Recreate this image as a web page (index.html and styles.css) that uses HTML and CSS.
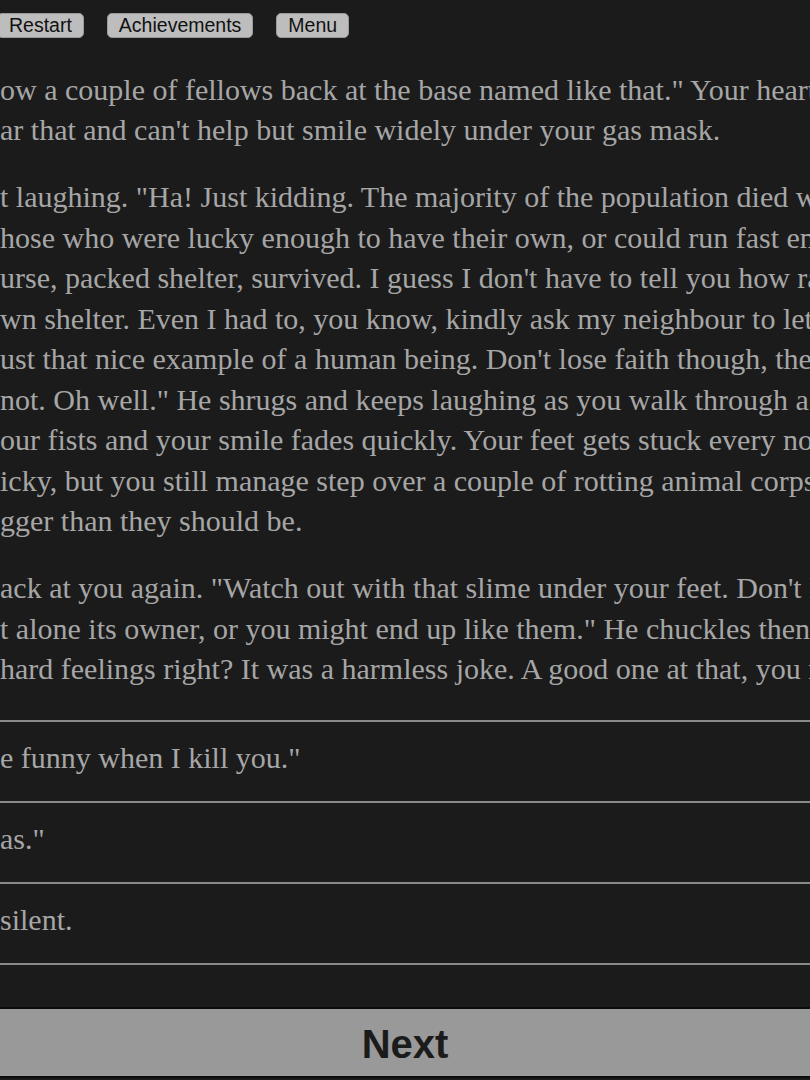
FILE: index.html
```html
<!DOCTYPE html>
<html lang="en">
<head>
<meta charset="utf-8">
<title>Story</title>
<link rel="stylesheet" href="styles.css">
</head>
<body>
<div class="page">
  <nav class="toolbar">
    <button class="tool-btn restart">Restart</button>
    <button class="tool-btn">Achievements</button>
    <button class="tool-btn">Menu</button>
  </nav>

  <main class="story">
    <p class="para">
      <span class="line">ow a couple of fellows back at the base named like that." Your hearthb</span>
      <span class="line">ar that and can't help but smile widely under your gas mask.</span>
    </p>
    <p class="para">
      <span class="line">t laughing. "Ha! Just kidding. The majority of the population died w</span>
      <span class="line">hose who were lucky enough to have their own, or could run fast en</span>
      <span class="line">urse, packed shelter, survived. I guess I don't have to tell you how ra</span>
      <span class="line">wn shelter. Even I had to, you know, kindly ask my neighbour to let m</span>
      <span class="line">ust that nice example of a human being. Don't lose faith though, they</span>
      <span class="line">not. Oh well." He shrugs and keeps laughing as you walk through a d</span>
      <span class="line">our fists and your smile fades quickly. Your feet gets stuck every now</span>
      <span class="line">icky, but you still manage step over a couple of rotting animal corpse</span>
      <span class="line">gger than they should be.</span>
    </p>
    <p class="para">
      <span class="line">ack at you again. "Watch out with that slime under your feet. Don't l</span>
      <span class="line">t alone its owner, or you might end up like them." He chuckles then</span>
      <span class="line">hard feelings right? It was a harmless joke. A good one at that, you m</span>
    </p>
  </main>

  <ul class="choices">
    <li class="choice">e funny when I kill you."</li>
    <li class="choice">as."</li>
    <li class="choice">silent.</li>
  </ul>

  <footer class="next-bar">
    <button class="next-btn">Next</button>
  </footer>
</div>
</body>
</html>
```

FILE: styles.css
```css
html, body {
  margin: 0;
  padding: 0;
  background: #1b1b1b;
}

.page {
  width: 810px;
  height: 1080px;
  overflow: hidden;
  background: #1b1b1b;
  color: #a6a6a6;
  font-family: "Liberation Serif", "Times New Roman", serif;
}

.toolbar {
  display: flex;
  gap: 23px;
  padding-top: 13px;
  margin-left: -3px;
  height: 25px;
}

.tool-btn {
  font-family: "Liberation Sans", Arial, sans-serif;
  font-size: 19.5px;
  line-height: 23px;
  height: 25px;
  padding: 0 11px;
  color: #111;
  background: #bdbdbd;
  border: 1px solid #9a9a9a;
  border-radius: 5px;
}

.story {
  padding-top: 31.5px;
}

.para {
  margin: 0 0 26.5px 0;
  font-size: 30px;
  line-height: 40.5px;
}

.line {
  display: block;
  white-space: nowrap;
}

.choices {
  list-style: none;
  margin: 30px 0 0 0;
  padding: 0;
}

.choice {
  border-top: 2px solid #8a8a8a;
  font-size: 30px;
  line-height: 40.5px;
  padding: 16px 0 22.5px 0;
  white-space: nowrap;
}

.choice:last-child {
  border-bottom: 2px solid #8a8a8a;
}

.next-bar {
  margin-top: 42px;
  border-top: 2px solid #0c0c0c;
  border-bottom: 2px solid #0c0c0c;
}

.next-btn {
  display: block;
  width: 100%;
  height: 67px;
  margin: 0;
  border: 0;
  background: #999999;
  color: #1b1b1b;
  font-family: "Liberation Sans", Arial, sans-serif;
  font-weight: bold;
  font-size: 40px;
  padding: 4px 0 0 0;
}
```
